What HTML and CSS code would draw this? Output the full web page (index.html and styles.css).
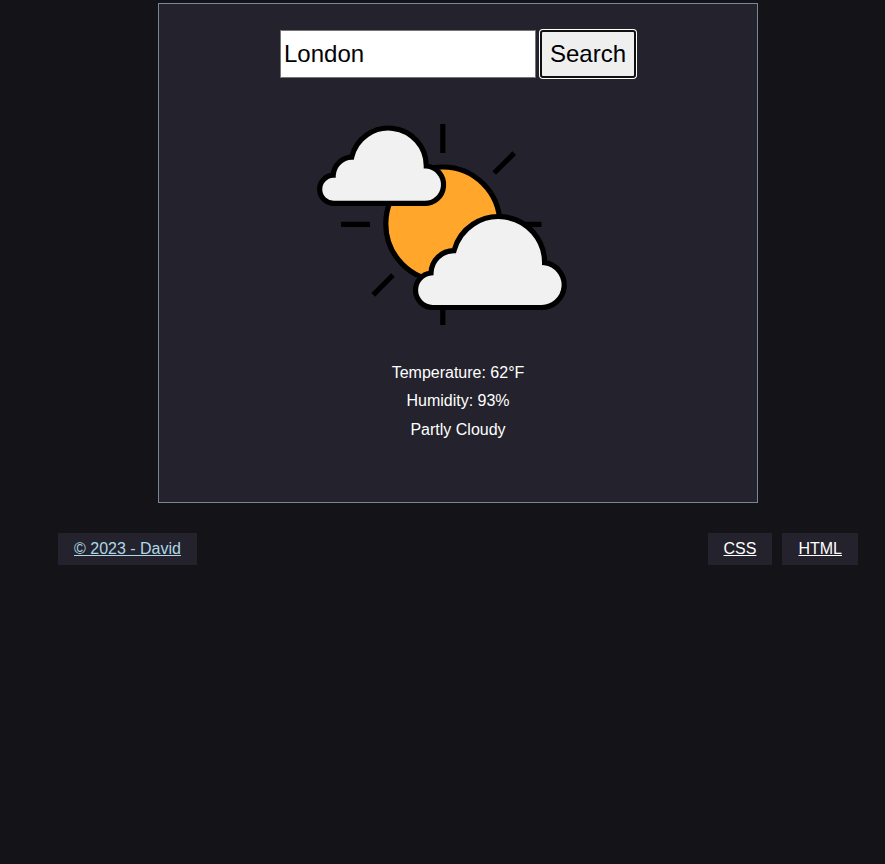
FILE: index.html
```html
<!DOCTYPE html>
<html lang="en">
<head>
<meta charset="utf-8">
<title>Weather</title>
<link rel="stylesheet" href="styles.css">
</head>
<body>
<main class="card">
  <form class="search">
    <input class="search-input" type="text" value="London" aria-label="City">
    <button class="search-button" type="button">Search</button>
  </form>
  <svg class="weather-icon" viewBox="308 104 300 240" role="img" aria-label="Partly cloudy">
    <g fill="none" stroke="#000" stroke-width="5.2">
      <path d="M442.8 124V153M442.8 295V325M341 224.3H370M512 224.3H541.5M494.2 173L514.2 153.2M373.2 294.8L393 275"/>
      <circle cx="442.8" cy="224" r="57" fill="#ffa62b"/>
      <path fill="#f1f1f1" d="M334.3 203.4A14.1 14.1 0 0 1 333.2 175.2A19 19 0 0 1 351.7 157.2A37.8 37.8 0 0 1 426.3 166A18.6 18.6 0 0 1 423.3 203.4Z"/>
      <path fill="#f1f1f1" d="M432.5 307.5A17.3 17.3 0 0 1 431 273A23 23 0 0 1 454 250.6A46.1 46.1 0 0 1 544.6 262.7A22.5 22.5 0 0 1 541 307.5Z"/>
    </g>
  </svg>
  <div class="readings">
    <p>Temperature: 62°F</p>
    <p>Humidity: 93%</p>
    <p>Partly Cloudy</p>
  </div>
</main>
<footer class="footer">
  <a class="tag tag-author" href="#">© 2023 - David</a>
  <nav class="footer-links">
    <a class="tag" href="#">CSS</a>
    <a class="tag" href="#">HTML</a>
  </nav>
</footer>
</body>
</html>
```
FILE: styles.css
```css
* { box-sizing: border-box; }

body {
  margin: 0;
  padding-top: 3px;
  min-height: 100vh;
  background: #141318;
  color: #fff;
  font: 16px "Liberation Sans", Arial, sans-serif;
}

.card {
  display: flex;
  flex-direction: column;
  align-items: center;
  width: 600px;
  height: 500px;
  margin-left: 158px;
  padding-top: 26px;
  background: #24232d;
  border: 1px solid #778899;
}

.search {
  display: flex;
  gap: 4px;
}

.search-input,
.search-button {
  height: 48px;
  margin: 0;
  font: 24px "Liberation Sans", Arial, sans-serif;
  color: #000;
}

.search-input {
  width: 256px;
  padding: 0 3px;
  background: #fff;
  border: 1px solid #767676;
  border-radius: 0;
}

.search-button {
  width: 96px;
  padding: 0;
  background: #efefef;
  border: 2px solid #101010;
  border-radius: 3px;
  box-shadow: 0 0 0 1px #fff;
}

.weather-icon {
  width: 300px;
  height: 240px;
  margin-top: 26px;
}

.readings {
  margin-top: 14.5px;
  text-align: center;
}

.readings p {
  margin: 0;
  line-height: 28.5px;
}

.footer {
  display: flex;
  justify-content: space-between;
  margin: 30px 27px 0 58px;
}

.footer-links {
  display: flex;
  gap: 10px;
}

.tag {
  padding: 0 16px;
  line-height: 32px;
  background: #24232d;
  color: #fff;
}

.tag-author { color: #add8e6; }
```
